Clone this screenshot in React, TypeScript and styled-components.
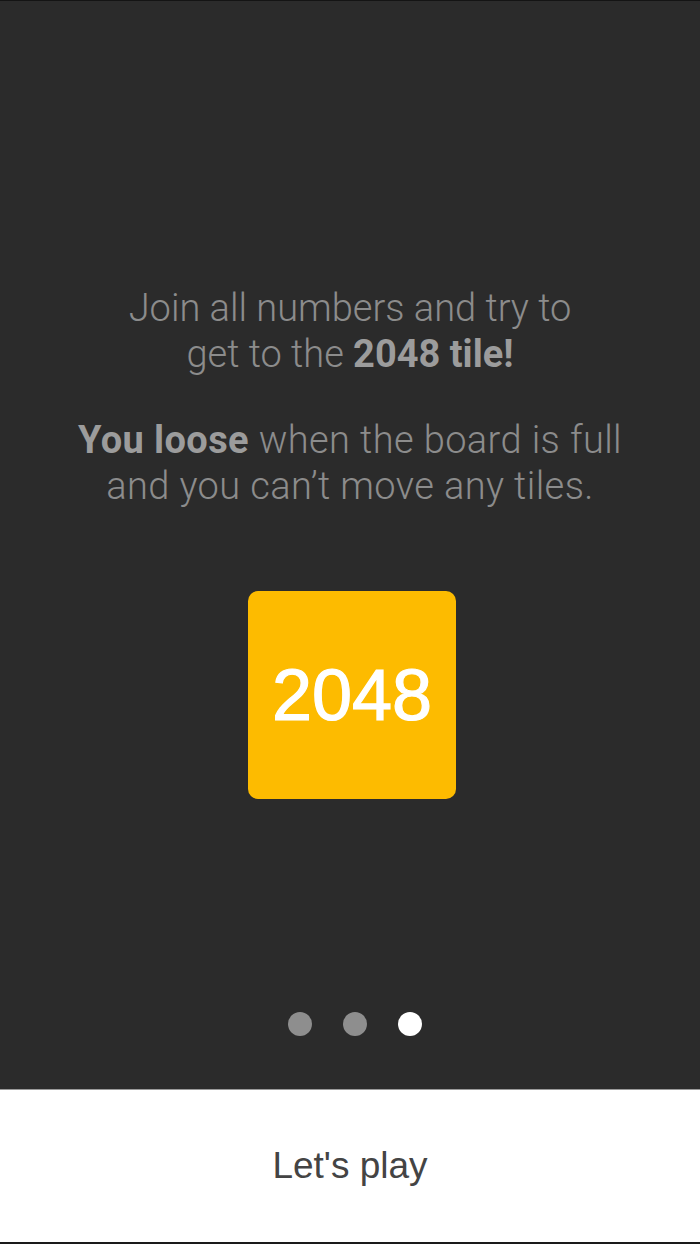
import React, { FC, useState } from 'react';
import styled, { createGlobalStyle } from 'styled-components';

const GlobalStyle = createGlobalStyle`
  html, body {
    margin: 0;
    padding: 0;
    background: #1c1c1c;
  }
  body {
    font-family: Roboto, 'Liberation Sans', Arial, sans-serif;
  }
`;

const pages = 3;

const App: FC = () => {
  const [current, setCurrent] = useState(2);

  return (
    <Screen>
      <GlobalStyle />
      <Intro>
        <Copy>
          <p>
            Join all numbers and try to
            <br />
            get to the <b>2048 tile!</b>
          </p>
          <p>
            <b>You loose</b> when the board is full
            <br />
            and you can’t move any tiles.
          </p>
        </Copy>
        <Tile>2048</Tile>
        <Pager>
          {Array.from({ length: pages }).map((_, i) => (
            <Dot key={i} active={i === current} onClick={() => setCurrent(i)} />
          ))}
        </Pager>
      </Intro>
      <PlayButton type="button">Let's play</PlayButton>
    </Screen>
  );
};

export default App;

const Screen = styled.div`
  display: flex;
  flex-direction: column;
  height: 1244px;
  border-top: 1px solid #141414;
  border-bottom: 2px solid #1a1a1a;
  box-sizing: border-box;
`;

const Intro = styled.main`
  flex: 1;
  display: flex;
  flex-direction: column;
  align-items: center;
  padding-top: 284px;
  background: #2b2b2b;
`;

const Copy = styled.div`
  text-align: center;
  color: #8c8c8c;
  font-size: 38px;
  font-weight: 300;
  line-height: 46px;

  p {
    margin: 0;
  }
  p + p {
    margin-top: 40px;
    letter-spacing: 0.4px;
  }
  b {
    font-weight: 700;
    color: #9c9c9c;
  }
`;

const Tile = styled.div`
  display: flex;
  align-items: center;
  justify-content: center;
  width: 208px;
  height: 208px;
  margin: 82px 0 0 4px;
  border-radius: 10px;
  background: #fdbb00;
  color: #ffffff;
  font-family: 'Liberation Sans', Arial, sans-serif;
  font-size: 72px;
  -webkit-text-stroke: 1.2px #ffffff;
`;

const Pager = styled.div`
  display: flex;
  gap: 31px;
  margin: 213px 0 0 9px;
`;

const Dot = styled.span<{ active: boolean }>`
  width: 24px;
  height: 24px;
  border-radius: 50%;
  background: ${({ active }) => (active ? '#ffffff' : '#8e8e8e')};
  cursor: pointer;
`;

const PlayButton = styled.button`
  height: 153px;
  border: none;
  border-top: 1px solid #9a9a9a;
  background: #ffffff;
  color: #444444;
  font-family: 'Liberation Sans', Arial, sans-serif;
  font-size: 37px;
  cursor: pointer;
`;
